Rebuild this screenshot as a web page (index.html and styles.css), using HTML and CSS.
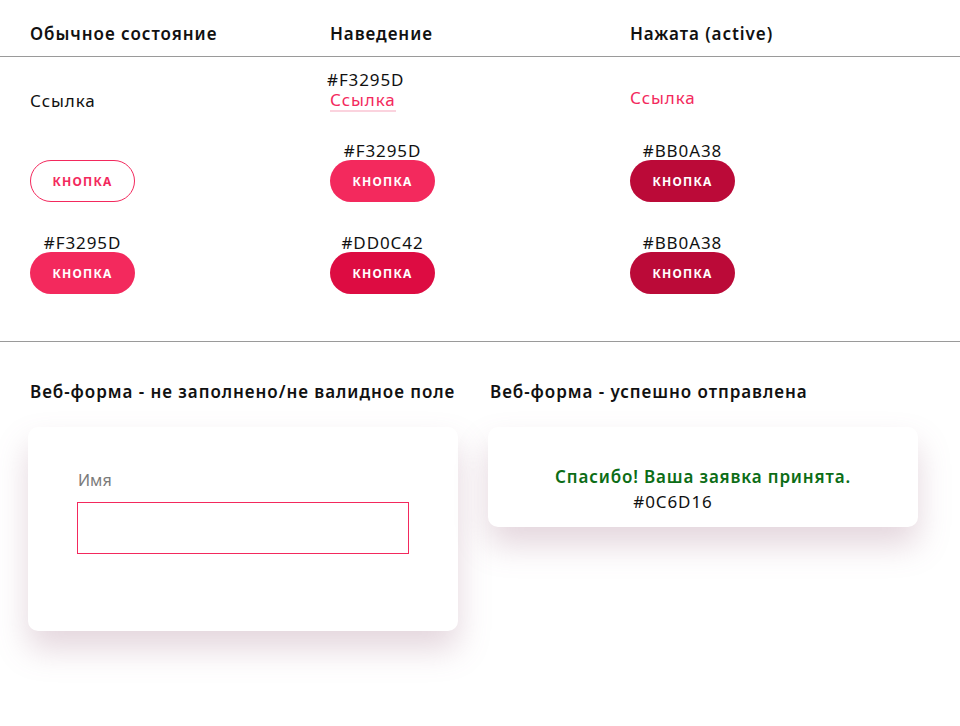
FILE: index.html
```html
<!DOCTYPE html>
<html lang="ru">
<head>
<meta charset="utf-8">
<title>Состояния</title>
<link rel="stylesheet" href="styles.css">
</head>
<body>
<header class="states-head">
  <h2 class="col-title">Обычное состояние</h2>
  <h2 class="col-title">Наведение</h2>
  <h2 class="col-title">Нажата (active)</h2>
</header>

<section class="states">
  <div class="row row-links">
    <div class="cell">
      <a class="link link-normal" href="#">Ссылка</a>
    </div>
    <div class="cell cell-link">
      <span class="hex hex-link">#F3295D</span>
      <a class="link link-hover" href="#">Ссылка</a>
    </div>
    <div class="cell">
      <a class="link link-active" href="#">Ссылка</a>
    </div>
  </div>

  <div class="row row-btns">
    <div class="cell">
      <div class="btn-wrap">
        <button class="btn btn-outline">Кнопка</button>
      </div>
    </div>
    <div class="cell">
      <div class="btn-wrap">
        <span class="hex">#F3295D</span>
        <button class="btn btn-pink">Кнопка</button>
      </div>
    </div>
    <div class="cell">
      <div class="btn-wrap">
        <span class="hex">#BB0A38</span>
        <button class="btn btn-dark">Кнопка</button>
      </div>
    </div>
  </div>

  <div class="row row-btns">
    <div class="cell">
      <div class="btn-wrap">
        <span class="hex">#F3295D</span>
        <button class="btn btn-pink">Кнопка</button>
      </div>
    </div>
    <div class="cell">
      <div class="btn-wrap">
        <span class="hex">#DD0C42</span>
        <button class="btn btn-mid">Кнопка</button>
      </div>
    </div>
    <div class="cell">
      <div class="btn-wrap">
        <span class="hex">#BB0A38</span>
        <button class="btn btn-dark">Кнопка</button>
      </div>
    </div>
  </div>
</section>

<section class="forms">
  <div class="form-col">
    <h2 class="form-title">Веб-форма - не заполнено/не валидное поле</h2>
    <div class="card card-form">
      <label class="field-label">Имя</label>
      <div class="field field-invalid"></div>
    </div>
  </div>
  <div class="form-col">
    <h2 class="form-title">Веб-форма - успешно отправлена</h2>
    <div class="card card-success">
      <p class="success-text">Спасибо! Ваша заявка принята.</p>
      <span class="hex hex-success">#0C6D16</span>
    </div>
  </div>
</section>
</body>
</html>
```

FILE: styles.css
```css
* {
  box-sizing: border-box;
}

body {
  margin: 0;
  background: #ffffff;
  font-family: "Noto Sans", "Open Sans", sans-serif;
  color: #111111;
}

h2, p {
  margin: 0;
}

.states-head {
  display: grid;
  grid-template-columns: repeat(3, 300px);
  padding: 22px 30px 0;
  height: 57px;
  border-bottom: 1px solid #9a9a9a;
}

.col-title {
  font-size: 17px;
  line-height: 24px;
  font-weight: 600;
  letter-spacing: 0.95px;
  color: #111111;
}

.states {
  padding: 0 30px 47px;
  border-bottom: 1px solid #9a9a9a;
}

.row {
  display: grid;
  grid-template-columns: repeat(3, 300px);
  align-items: end;
}

.row-links {
  height: 55px;
}

.row-btns {
  margin-top: 32px;
}

.row-links + .row-btns {
  margin-top: 30px;
}

.cell {
  display: flex;
  flex-direction: column;
  align-items: flex-start;
}

.cell-link {
  margin-left: -3px;
}

.hex {
  font-size: 17px;
  line-height: 18px;
  letter-spacing: 0.9px;
  color: #111111;
  white-space: nowrap;
}

.link {
  font-size: 17px;
  line-height: 22px;
  letter-spacing: 0.9px;
  text-decoration: none;
}

.link-normal {
  color: #111111;
}

.link-hover {
  color: #f3295d;
  margin-left: 3px;
  margin-top: 2px;
  border-bottom: 2px solid #fbd3de;
  padding-bottom: 1px;
  line-height: 18px;
}

.link-active {
  color: #f3295d;
  transform: translateY(-3px);
}

.btn-wrap {
  display: flex;
  flex-direction: column;
  align-items: center;
  width: 105px;
}

.btn {
  width: 105px;
  height: 42px;
  border-radius: 21px;
  border: 1px solid transparent;
  font-family: "Noto Sans", "Open Sans", sans-serif;
  font-size: 12px;
  font-weight: 700;
  letter-spacing: 1.2px;
  text-transform: uppercase;
  color: #ffffff;
  padding: 0;
  cursor: pointer;
}

.btn-outline {
  background: #ffffff;
  border-color: #f3295d;
  color: #f3295d;
}

.btn-pink {
  background: #f3295d;
}

.btn-mid {
  background: #dd0c42;
}

.btn-dark {
  background: #bb0a38;
}

.forms {
  display: grid;
  grid-template-columns: 430px 430px;
  column-gap: 30px;
  align-items: start;
  padding: 38px 28px 80px;
}

.form-title {
  font-size: 17px;
  line-height: 24px;
  font-weight: 600;
  letter-spacing: 0.95px;
  padding-left: 2px;
  margin-bottom: 23px;
  white-space: nowrap;
}

.card {
  background: #ffffff;
  border-radius: 10px;
  box-shadow: 0 18px 32px rgba(150, 95, 125, 0.26);
}

.card-form {
  padding: 42px 49px 77px;
}

.field-label {
  display: block;
  font-size: 16px;
  line-height: 22px;
  color: #7a7a7a;
  padding-left: 1px;
  margin-bottom: 11px;
}

.field {
  height: 52px;
  width: 332px;
  border: 1px solid #f3295d;
  background: #ffffff;
}

.card-success {
  height: 100px;
  display: flex;
  flex-direction: column;
  align-items: center;
  padding-top: 38px;
}

.success-text {
  font-size: 17px;
  line-height: 24px;
  font-weight: 600;
  letter-spacing: 0.85px;
  color: #0c6d16;
}

.hex-success {
  margin-left: -60px;
  margin-top: 4px;
}
```
